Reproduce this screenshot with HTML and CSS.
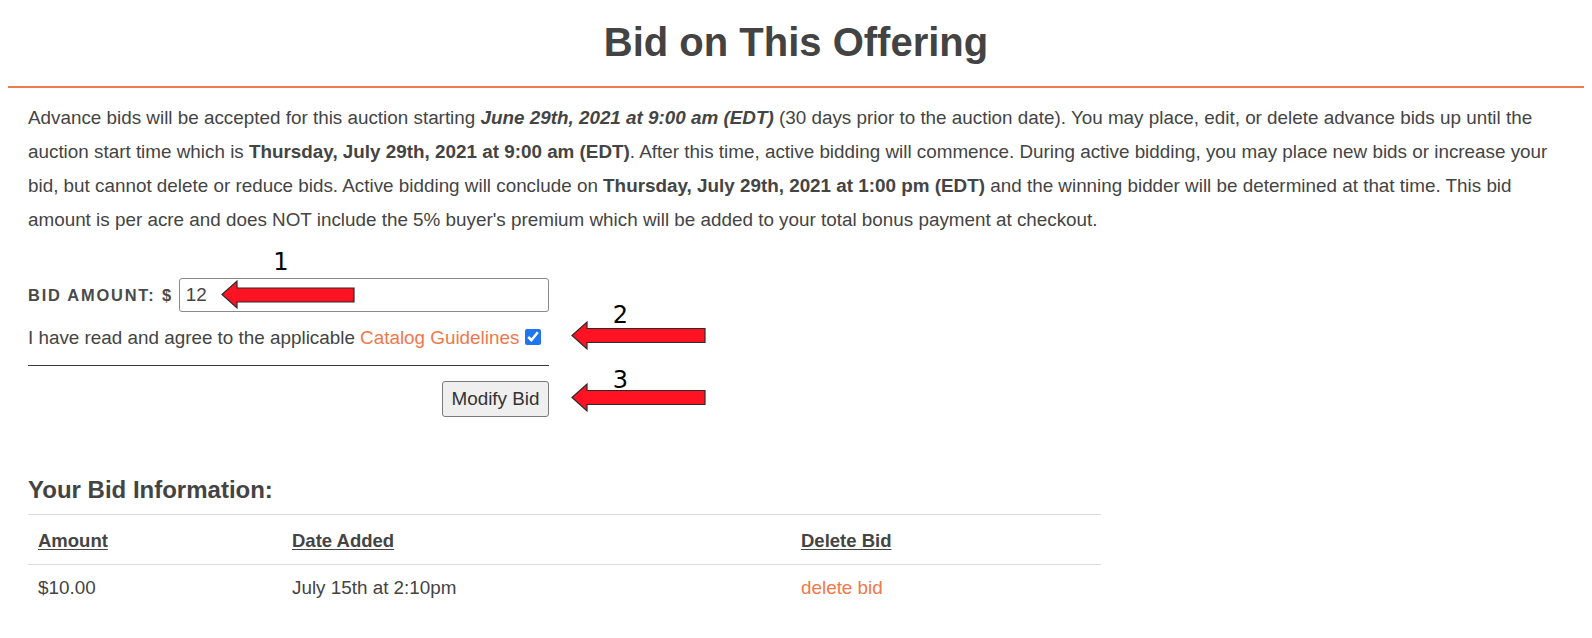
FILE: index.html
```html
<!DOCTYPE html>
<html lang="en">
<head>
<meta charset="utf-8">
<title>Bid on This Offering</title>
<link rel="stylesheet" href="styles.css">
</head>
<body>
<div class="page">
  <h1 class="title">Bid on This Offering</h1>
  <div class="content">
    <p class="intro">Advance bids will be accepted for this auction starting <b><i>June 29th, 2021 at 9:00 am (EDT)</i></b> (30 days prior to the auction date). You may place, edit, or delete advance bids up until the auction start time which is <b>Thursday, July 29th, 2021 at 9:00 am (EDT)</b>. After this time, active bidding will commence. During active bidding, you may place new bids or increase your bid, but cannot delete or reduce bids. Active bidding will conclude on <b>Thursday, July 29th, 2021 at 1:00 pm (EDT)</b> and the winning bidder will be determined at that time. This bid amount is per acre and does NOT include the 5% buyer's premium which will be added to your total bonus payment at checkout.</p>

    <form class="bid-form">
      <div class="amount-row">
        <label class="amount-label" for="amount">BID AMOUNT: $</label>
        <input class="amount-input" id="amount" type="text" value="12">
      </div>
      <div class="agree-row">I have read and agree to the applicable <a class="link" href="#">Catalog Guidelines</a><input class="agree-check" type="checkbox" checked></div>
      <div class="form-actions">
        <button class="submit-btn" type="button">Modify Bid</button>
      </div>
    </form>

    <h2 class="section-title">Your Bid Information:</h2>
    <table class="bids">
      <thead>
        <tr>
          <th class="col-amount"><a href="#" class="th-link">Amount</a></th>
          <th class="col-date"><a href="#" class="th-link">Date Added</a></th>
          <th class="col-del"><a href="#" class="th-link">Delete Bid</a></th>
        </tr>
      </thead>
      <tbody>
        <tr>
          <td>$10.00</td>
          <td>July 15th at 2:10pm</td>
          <td><a class="link" href="#">delete bid</a></td>
        </tr>
      </tbody>
    </table>
  </div>
</div>

<svg class="annotations" width="1592" height="638" viewBox="0 0 1592 638" aria-hidden="true">
  <polygon class="arrow" points="222,294.5 237,281 237,288 354,288 354,302 237,302 237,308"/>
  <polygon class="arrow" points="572,335.5 587,322 587,328.5 705,328.5 705,342.5 587,342.5 587,349"/>
  <polygon class="arrow" points="572,397.5 587,384 587,390.5 705,390.5 705,404.5 587,404.5 587,411"/>
  <text class="num" x="281" y="270">1</text>
  <text class="num" x="620.5" y="323">2</text>
  <text class="num" x="620.5" y="388">3</text>
</svg>
</body>
</html>
```

FILE: styles.css
```css
* { box-sizing: border-box; }

html, body {
  margin: 0;
  padding: 0;
  background: #ffffff;
}

body {
  font-family: "Liberation Sans", Arial, Helvetica, sans-serif;
  font-size: 18.85px;
  color: #444444;
  width: 1592px;
  height: 638px;
  overflow: hidden;
}

.page {
  padding: 0 8px;
}

.title {
  margin: 19px 0 0;
  padding-bottom: 21px;
  border-bottom: 2px solid #f07b4f;
  font-size: 40px;
  line-height: 46px;
  font-weight: bold;
  text-align: center;
  color: #434343;
}

.content {
  padding: 0 20px;
}

.intro {
  margin: 12.5px 0 0;
  line-height: 34px;
  font-size: 18.85px;
}

.bid-form {
  width: 521px;
  margin-top: 41.5px;
}

.amount-row {
  display: flex;
  align-items: center;
}

.amount-label {
  font-weight: bold;
  font-size: 16.4px;
  line-height: 18px;
  letter-spacing: 1.8px;
  margin-right: 6px;
  color: #4a4a4a;
}

.amount-input {
  flex: 1;
  height: 34px;
  border: 1px solid #8a8a8a;
  border-radius: 3px;
  padding: 0 6px;
  font-family: "Liberation Sans", Arial, sans-serif;
  font-size: 18.85px;
  color: #444444;
  background: #ffffff;
  outline: none;
}

.agree-row {
  margin-top: 15.5px;
  line-height: 20px;
  font-size: 18.85px;
}

.link {
  color: #f0784a;
  text-decoration: none;
}

.agree-check {
  width: 16px;
  height: 16px;
  margin: 0 0 0 6px;
  vertical-align: -1px;
  accent-color: #1f74f0;
}

.form-actions {
  margin-top: 17.5px;
  border-top: 1px solid #3a3a3a;
  padding-top: 15px;
  display: flex;
  justify-content: flex-end;
}

.submit-btn {
  height: 36px;
  width: 107px;
  padding: 0;
  font-family: "Liberation Sans", Arial, sans-serif;
  font-size: 18.85px;
  color: #333333;
  background: #efefef;
  border: 1px solid #7a7a7a;
  border-radius: 3px;
}

.section-title {
  margin: 58.7px 0 10.3px;
  font-size: 24px;
  line-height: 28px;
  font-weight: bold;
  color: #434343;
}

.bids {
  width: 1073px;
  table-layout: fixed;
  border-collapse: separate;
  border-spacing: 0;
}

.bids th {
  text-align: left;
  font-size: 18.5px;
  line-height: 24px;
  font-weight: bold;
  padding: 13.6px 10px 11.4px;
  border-top: 1px solid #dddddd;
  border-bottom: 1px solid #dddddd;
}

.col-amount { width: 254px; }
.col-date { width: 509px; }
.col-del { width: 310px; }

.th-link {
  color: #444444;
  text-decoration: underline;
  text-underline-offset: 2px;
}

.bids td {
  font-size: 18.85px;
  line-height: 24px;
  padding: 11.5px 10px 12px;
}

.annotations {
  position: absolute;
  top: 0;
  left: 0;
  pointer-events: none;
}

.arrow {
  fill: #ff1222;
  stroke: #2b2b2b;
  stroke-width: 1.2;
  stroke-linejoin: miter;
}

.num {
  font-family: "DejaVu Sans", sans-serif;
  font-size: 24px;
  text-anchor: middle;
  fill: #000000;
}
```
